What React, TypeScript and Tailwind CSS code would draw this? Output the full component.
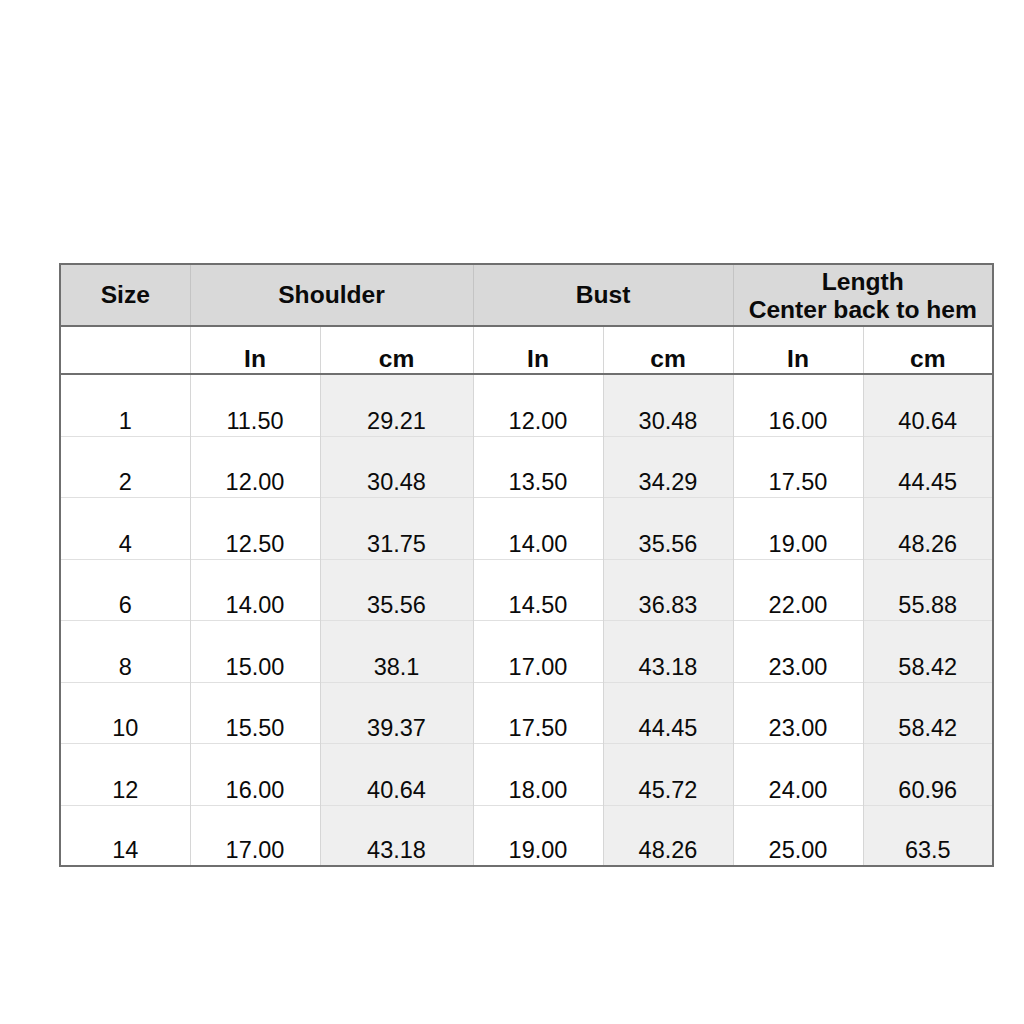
import React from 'react';

const rows: [string, string, string, string, string, string, string][] = [
  ['1', '11.50', '29.21', '12.00', '30.48', '16.00', '40.64'],
  ['2', '12.00', '30.48', '13.50', '34.29', '17.50', '44.45'],
  ['4', '12.50', '31.75', '14.00', '35.56', '19.00', '48.26'],
  ['6', '14.00', '35.56', '14.50', '36.83', '22.00', '55.88'],
  ['8', '15.00', '38.1', '17.00', '43.18', '23.00', '58.42'],
  ['10', '15.50', '39.37', '17.50', '44.45', '23.00', '58.42'],
  ['12', '16.00', '40.64', '18.00', '45.72', '24.00', '60.96'],
  ['14', '17.00', '43.18', '19.00', '48.26', '25.00', '63.5'],
];

const widths = ['w-[130px]', 'w-[130px]', 'w-[153px]', 'w-[130px]', 'w-[130px]', 'w-[130px]', 'w-[130px]'];

export default function App() {
  return (
    <div className="w-[1024px] h-[1024px] bg-white pt-[263px] pl-[59px] font-['Liberation_Sans',Arial,sans-serif] text-[#0a0a0a]">
      <table className="border-collapse border-2 border-[#6f6f6f] table-fixed">
        <colgroup>
          {widths.map((w, i) => (
            <col key={i} className={w} />
          ))}
        </colgroup>
        <thead>
          <tr className="h-[62px] bg-[#d9d9d9] text-[24.6px] font-bold border-b-2 border-[#6f6f6f]">
            <th className="border-r border-[#c4c4c4] font-bold">Size</th>
            <th colSpan={2} className="border-r border-[#c4c4c4] font-bold">Shoulder</th>
            <th colSpan={2} className="border-r border-[#c4c4c4] font-bold">Bust</th>
            <th colSpan={2} className="font-bold leading-[28px] pt-[2px]">
              Length
              <br />
              Center back to hem
            </th>
          </tr>
          <tr className="h-[48px] bg-white text-[24.6px] border-b-2 border-[#6f6f6f]">
            <th className="border-r border-[#d6d6d6]"></th>
            {['In', 'cm', 'In', 'cm', 'In', 'cm'].map((t, i) => (
              <th
                key={i}
                className={`align-bottom pb-0 leading-[28px] font-bold ${i < 5 ? 'border-r border-[#d6d6d6]' : ''}`}
              >
                {t}
              </th>
            ))}
          </tr>
        </thead>
        <tbody>
          {rows.map((r, ri) => (
            <tr
              key={ri}
              className={`${ri % 2 === 0 ? 'h-[62px]' : 'h-[61px]'} text-[23.5px] ${ri < rows.length - 1 ? 'border-b border-[#e0e0e0]' : ''}`}
            >
              {r.map((v, ci) => (
                <td
                  key={ci}
                  className={`text-center align-bottom pb-[2px] leading-[26px] ${ci < 6 ? 'border-r border-[#d6d6d6]' : ''} ${ci === 2 || ci === 4 || ci === 6 ? 'bg-[#efefef]' : 'bg-white'}`}
                >
                  {v}
                </td>
              ))}
            </tr>
          ))}
        </tbody>
      </table>
    </div>
  );
}
